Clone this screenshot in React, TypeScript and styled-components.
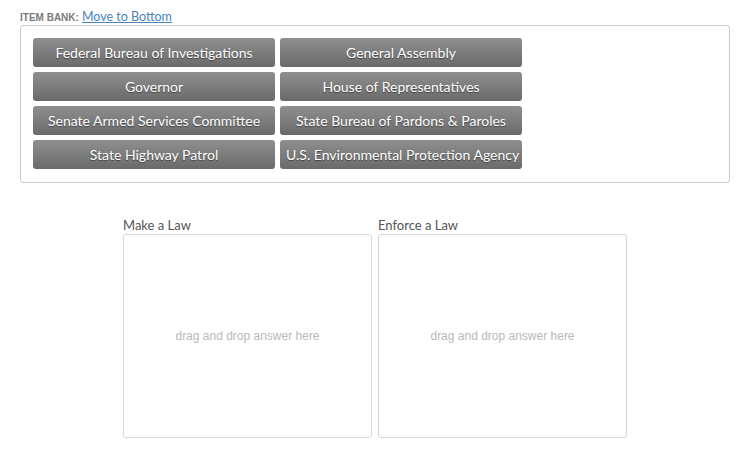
import { createGlobalStyle, styled } from "styled-components";

const GlobalStyle = createGlobalStyle`
  body {
    margin: 0;
    background: #fff;
    font-family: Lato, "Open Sans", sans-serif;
  }
`;

const Page = styled.div`
  padding: 9px 17px 0 20px;
`;

const BankHeader = styled.div`
  display: flex;
  align-items: baseline;
  gap: 3px;
  height: 16px;
`;

const BankLabel = styled.span`
  font-family: "Liberation Sans", Arial, sans-serif;
  font-size: 10px;
  font-weight: 700;
  color: #7a7a7a;
  text-transform: uppercase;
`;

const MoveLink = styled.a`
  font-family: Lato, sans-serif;
  font-size: 12.5px;
  color: #4a82bd;
  text-decoration: underline;
  cursor: pointer;
`;

const Bank = styled.div`
  border: 1px solid #c9c9c9;
  border-radius: 3px;
  padding: 12px 12px 13px 12px;
  display: grid;
  grid-template-columns: 242px 242px;
  column-gap: 5px;
  row-gap: 5px;
`;

const Item = styled.button`
  height: 29px;
  border: 0;
  border-radius: 3px;
  background: linear-gradient(to bottom, #8f8f8f 0%, #6a6a6a 100%);
  color: #fff;
  font-family: Lato, sans-serif;
  font-size: 14px;
  text-shadow: 0 1px 1px rgba(0, 0, 0, 0.45);
  padding: 0 6px;
  white-space: nowrap;
  cursor: move;
`;

const Zones = styled.div`
  display: flex;
  justify-content: center;
  gap: 6px;
  margin-top: 34px;
`;

const Zone = styled.div`
  display: flex;
  flex-direction: column;
  width: 249px;
`;

const ZoneTitle = styled.div`
  font-family: Lato, sans-serif;
  font-size: 13px;
  color: #555;
  height: 17px;
  line-height: 17px;
`;

const DropArea = styled.div`
  height: 202px;
  border: 1px solid #d6d6d6;
  border-radius: 3px;
  display: flex;
  align-items: center;
  justify-content: center;
  font-family: "Liberation Sans", Arial, sans-serif;
  font-size: 12px;
  color: #b9b9b9;
`;

const items = [
  "Federal Bureau of Investigations",
  "General Assembly",
  "Governor",
  "House of Representatives",
  "Senate Armed Services Committee",
  "State Bureau of Pardons & Paroles",
  "State Highway Patrol",
  "U.S. Environmental Protection Agency",
];

const zones = ["Make a Law", "Enforce a Law"];

export default function App() {
  return (
    <>
      <GlobalStyle />
      <Page>
        <BankHeader>
          <BankLabel>Item Bank:</BankLabel>
          <MoveLink>Move to Bottom</MoveLink>
        </BankHeader>
        <Bank>
          {items.map((item) => (
            <Item key={item}>{item}</Item>
          ))}
        </Bank>
        <Zones>
          {zones.map((z) => (
            <Zone key={z}>
              <ZoneTitle>{z}</ZoneTitle>
              <DropArea>drag and drop answer here</DropArea>
            </Zone>
          ))}
        </Zones>
      </Page>
    </>
  );
}
